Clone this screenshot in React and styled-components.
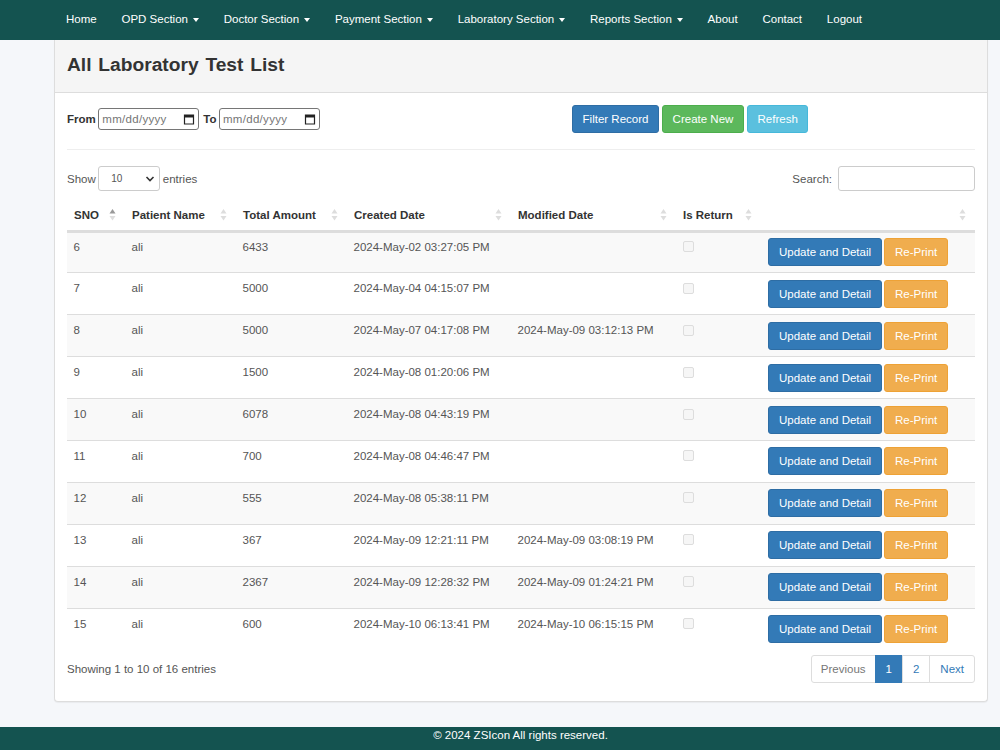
import React from 'react';
import styled, { createGlobalStyle } from 'styled-components';

const GlobalStyle = createGlobalStyle`
  * {
    box-sizing: border-box;
  }
  html, body {
    margin: 0;
    padding: 0;
    height: 750px;
    overflow: hidden;
    background: #f5f7fa;
    font-family: "Liberation Sans", Arial, sans-serif;
    font-size: 11.5px;
    color: #555;
  }
`;

const navItems = [
  { label: 'Home' },
  { label: 'OPD Section', caret: true },
  { label: 'Doctor Section', caret: true },
  { label: 'Payment Section', caret: true },
  { label: 'Laboratory Section', caret: true },
  { label: 'Reports Section', caret: true },
  { label: 'About' },
  { label: 'Contact' },
  { label: 'Logout' },
];

const columns = [
  { label: 'SNO', width: 58, active: true },
  { label: 'Patient Name', width: 111 },
  { label: 'Total Amount', width: 111 },
  { label: 'Created Date', width: 164 },
  { label: 'Modified Date', width: 165 },
  { label: 'Is Return', width: 85 },
  { label: '', width: 214 },
];

const rows = [
  [6, 6433, '2024-May-02 03:27:05 PM', ''],
  [7, 5000, '2024-May-04 04:15:07 PM', ''],
  [8, 5000, '2024-May-07 04:17:08 PM', '2024-May-09 03:12:13 PM'],
  [9, 1500, '2024-May-08 01:20:06 PM', ''],
  [10, 6078, '2024-May-08 04:43:19 PM', ''],
  [11, 700, '2024-May-08 04:46:47 PM', ''],
  [12, 555, '2024-May-08 05:38:11 PM', ''],
  [13, 367, '2024-May-09 12:21:11 PM', '2024-May-09 03:08:19 PM'],
  [14, 2367, '2024-May-09 12:28:32 PM', '2024-May-09 01:24:21 PM'],
  [15, 600, '2024-May-10 06:13:41 PM', '2024-May-10 06:15:15 PM'],
];

const Page = styled.div`
  display: flex;
  flex-direction: column;
  height: 750px;
`;

const Navbar = styled.nav`
  display: flex;
  height: 40px;
  flex-shrink: 0;
  padding-left: 53.6px;
  background: #145350;
`;

const NavLink = styled.a`
  display: flex;
  align-items: center;
  gap: 5px;
  height: 38px;
  padding: 0 12.4px;
  color: #fff;
  font-size: 11.5px;
  white-space: nowrap;
`;

const Caret = styled.span`
  width: 0;
  height: 0;
  margin-top: 2px;
  border-top: 4px solid #fff;
  border-left: 3.75px solid transparent;
  border-right: 3.75px solid transparent;
`;

const Panel = styled.section`
  width: 934px;
  height: 662px;
  margin-left: 54px;
  background: #fff;
  border: 1px solid #ddd;
  border-top: 0;
  border-radius: 0 0 4px 4px;
  box-shadow: 0 1px 1px rgba(0, 0, 0, 0.05);
`;

const PanelHeading = styled.header`
  display: flex;
  align-items: center;
  height: 53px;
  padding: 0 12px;
  background: #f5f5f5;
  border-bottom: 1px solid #ddd;
`;

const Title = styled.h3`
  margin: 0 0 2px;
  color: #333;
  font-size: 19.2px;
  font-weight: 700;
  word-spacing: 1.5px;
`;

const PanelBody = styled.div`
  padding: 0 12px;
`;

const FilterBar = styled.div`
  display: flex;
  align-items: flex-start;
  height: 57px;
  padding-top: 12px;
  border-bottom: 1px solid #eee;
`;

const DateGroup = styled.div`
  display: flex;
  align-items: center;
  gap: 2.5px;
  width: 505px;
  height: 28px;
  padding-bottom: 1px;
`;

const DateLabel = styled.label`
  color: #333;
  font-weight: 700;
  font-size: 11.5px;
`;

const DateField = styled.span`
  display: flex;
  align-items: center;
  justify-content: space-between;
  width: 101px;
  height: 22px;
  margin-right: 1.5px;
  padding: 0 3px;
  border: 1px solid #767676;
  border-radius: 3px;
  color: #757575;
  font-size: 11.5px;
  letter-spacing: 0.3px;
`;

const Button = styled.button`
  height: 28px;
  padding: 0 10px;
  border: 1px solid ${p => p.$border};
  border-radius: 3px;
  background: ${p => p.$bg};
  color: #fff;
  font-family: inherit;
  font-size: 11.5px;
  white-space: nowrap;
`;

const FilterButton = styled(Button)`
  padding: 0 9.6px;
`;

const ButtonRow = styled.div`
  display: flex;
  gap: 3px;
`;

const TableTools = styled.div`
  display: flex;
  align-items: center;
  justify-content: space-between;
  height: 25px;
  margin-top: 16px;
  margin-bottom: 10px;
`;

const LengthControl = styled.label`
  display: flex;
  align-items: center;
  gap: 2.5px;
`;

const PageSize = styled.span`
  display: flex;
  align-items: center;
  justify-content: space-between;
  width: 62px;
  height: 25px;
  padding: 0 4px 0 12px;
  border: 1px solid #ccc;
  border-radius: 3px;
  color: #555;
  font-size: 10px;
`;

const SearchControl = styled.label`
  display: flex;
  align-items: center;
  gap: 6px;
`;

const SearchBox = styled.span`
  display: block;
  width: 137px;
  height: 25px;
  border: 1px solid #ccc;
  border-radius: 3px;
`;

const Table = styled.table`
  width: 908px;
  table-layout: fixed;
  border-collapse: collapse;
`;

const HeadCell = styled.th`
  position: relative;
  height: 30px;
  padding: 0 7px;
  border-bottom: 3px solid #ddd;
  color: #333;
  font-size: 11.5px;
  font-weight: 700;
  text-align: left;
`;

const SortIcon = styled.svg`
  position: absolute;
  top: 7px;
  right: 9px;
`;

const Row = styled.tr`
  height: 41.9px;
  background: ${p => (p.$striped ? '#f9f9f9' : '#fff')};
  border-bottom: 1px solid #ddd;
  &:last-child {
    border-bottom: 0;
  }
`;

const Cell = styled.td`
  padding: 0 6.5px 11px;
  vertical-align: middle;
  color: #555;
  font-size: 11.5px;
  white-space: nowrap;
`;

const ActionCell = styled.td`
  padding: 0 0 0 7px;
  vertical-align: middle;
`;

const Actions = styled.div`
  display: flex;
  gap: 2px;
`;

const Check = styled.span`
  display: block;
  width: 11px;
  height: 11px;
  border: 1px solid #ddd;
  border-radius: 2px;
  background: #f6f6f6;
`;

const TableFooter = styled.div`
  display: flex;
  align-items: center;
  justify-content: space-between;
  margin-top: 5px;
`;

const Pagination = styled.div`
  display: flex;
  height: 28px;
`;

const PageLink = styled.a`
  display: flex;
  align-items: center;
  padding: 0 10px;
  margin-left: -1px;
  border: 1px solid ${p => (p.$active ? '#337ab7' : '#ddd')};
  background: ${p => (p.$active ? '#337ab7' : '#fff')};
  color: ${p => (p.$active ? '#fff' : p.$disabled ? '#777' : '#337ab7')};
  font-size: 11.5px;
  &:first-child {
    padding: 0 9px;
    border-radius: 3px 0 0 3px;
  }
  &:last-child {
    border-radius: 0 3px 3px 0;
  }
`;

const Footer = styled.footer`
  display: flex;
  justify-content: center;
  height: 23px;
  margin-top: 25px;
  padding: 2px 0 0 41px;
  background: #145350;
  color: #fff;
  font-size: 11.5px;
  flex-shrink: 0;
`;

const CalendarIcon = () => (
  <svg width="12" height="12" viewBox="0 0 12 12">
    <path d="M1.5 2h9v9h-9z" fill="none" stroke="#222" strokeWidth="1.2" />
    <path d="M1.5 2h9v2.5h-9z" fill="#222" />
  </svg>
);

const SortArrows = ({ active }) => (
  <SortIcon width="7" height="14" viewBox="0 0 7 14">
    <path d="M3.5 1 L6.5 5.5 H0.5 Z" fill={active ? '#999' : '#ddd'} />
    <path d="M3.5 12.5 L6.5 8 H0.5 Z" fill="#ddd" />
  </SortIcon>
);

const App = () => {
  return (
    <Page>
      <GlobalStyle />
      <Navbar>
        {navItems.map(item => (
          <NavLink key={item.label}>
            {item.label}
            {item.caret && <Caret />}
          </NavLink>
        ))}
      </Navbar>
      <Panel>
        <PanelHeading>
          <Title>All Laboratory Test List</Title>
        </PanelHeading>
        <PanelBody>
          <FilterBar>
            <DateGroup>
              <DateLabel>From</DateLabel>
              <DateField>
                mm/dd/yyyy
                <CalendarIcon />
              </DateField>
              <DateLabel>To</DateLabel>
              <DateField>
                mm/dd/yyyy
                <CalendarIcon />
              </DateField>
            </DateGroup>
            <ButtonRow>
              <FilterButton $bg="#337ab7" $border="#2e6da4">Filter Record</FilterButton>
              <FilterButton $bg="#5cb85c" $border="#4cae4c">Create New</FilterButton>
              <FilterButton $bg="#5bc0de" $border="#46b8da">Refresh</FilterButton>
            </ButtonRow>
          </FilterBar>
          <TableTools>
            <LengthControl>
              Show
              <PageSize>
                10
                <svg width="10" height="6" viewBox="0 0 10 6">
                  <path d="M1.5 1 L5 4.5 L8.5 1" fill="none" stroke="#333" strokeWidth="1.6" />
                </svg>
              </PageSize>
              entries
            </LengthControl>
            <SearchControl>
              Search:
              <SearchBox />
            </SearchControl>
          </TableTools>
          <Table>
            <colgroup>
              {columns.map((col, idx) => (
                <col key={idx} width={col.width} />
              ))}
            </colgroup>
            <thead>
              <tr>
                {columns.map((col, idx) => (
                  <HeadCell key={idx}>
                    {col.label}
                    <SortArrows active={col.active} />
                  </HeadCell>
                ))}
              </tr>
            </thead>
            <tbody>
              {rows.map((row, idx) => (
                <Row key={row[0]} $striped={idx % 2 === 0}>
                  <Cell>{row[0]}</Cell>
                  <Cell>ali</Cell>
                  <Cell>{row[1]}</Cell>
                  <Cell>{row[2]}</Cell>
                  <Cell>{row[3]}</Cell>
                  <Cell>
                    <Check />
                  </Cell>
                  <ActionCell>
                    <Actions>
                      <Button $bg="#337ab7" $border="#2e6da4">Update and Detail</Button>
                      <Button $bg="#f0ad4e" $border="#eea236">Re-Print</Button>
                    </Actions>
                  </ActionCell>
                </Row>
              ))}
            </tbody>
          </Table>
          <TableFooter>
            <span>Showing 1 to 10 of 16 entries</span>
            <Pagination>
              <PageLink $disabled>Previous</PageLink>
              <PageLink $active>1</PageLink>
              <PageLink>2</PageLink>
              <PageLink>Next</PageLink>
            </Pagination>
          </TableFooter>
        </PanelBody>
      </Panel>
      <Footer>© 2024 ZSIcon All rights reserved.</Footer>
    </Page>
  );
};

export default App;
